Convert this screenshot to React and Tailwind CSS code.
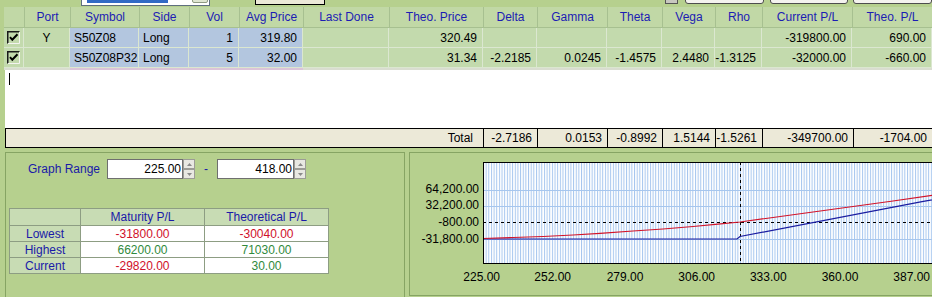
import React from 'react';

// column layout of the position grid
const COLS = [
  { title: '', align: 'center' },
  { title: 'Port', align: 'center' },
  { title: 'Symbol', align: 'left', blue: true },
  { title: 'Side', align: 'left', blue: true },
  { title: 'Vol', align: 'right', blue: true },
  { title: 'Avg Price', align: 'right', blue: true },
  { title: 'Last Done', align: 'right' },
  { title: 'Theo. Price', align: 'right' },
  { title: 'Delta', align: 'right' },
  { title: 'Gamma', align: 'right' },
  { title: 'Theta', align: 'right' },
  { title: 'Vega', align: 'right' },
  { title: 'Rho', align: 'right' },
  { title: 'Current P/L', align: 'right' },
  { title: 'Theo. P/L', align: 'right' },
];

const ROWS = [
  ['check', 'Y', 'S50Z08', 'Long', '1', '319.80', '', '320.49', '', '', '', '', '', '-319800.00', '690.00'],
  ['check', '', 'S50Z08P32', 'Long', '5', '32.00', '', '31.34', '-2.2185', '0.0245', '-1.4575', '2.4480', '-1.3125', '-32000.00', '-660.00'],
];

const TOTALS = ['-2.7186', '0.0153', '-0.8992', '1.5144', '-1.5261', '-349700.00', '-1704.00'];

const alignCls = {
  center: 'justify-center',
  left: 'justify-start pl-[4px]',
  right: 'justify-end pr-[5px]',
};

const gridCols =
  'grid grid-cols-[20px_46px_69px_50px_50px_64px_86px_94px_54px_70px_55px_53px_47px_90px_80px]';

function Check() {
  return (
    <svg width="13" height="13" viewBox="0 0 13 13">
      <path d="M0.5 12.5V0.5H12.5" fill="none" stroke="#1a1a1a" strokeWidth="2" />
      <path d="M12.5 1V12.5H1" fill="none" stroke="#f4f4f0" strokeWidth="1" />
      <path d="M3 6.2L5.3 8.8L10.5 3.2" fill="none" stroke="#000" strokeWidth="2" />
    </svg>
  );
}

function Spinner() {
  return (
    <div className="flex h-[20px] w-[12px] flex-col">
      <div className="flex h-[10px] items-center justify-center border border-[#9c9c96] bg-[#e8e8e2]">
        <svg width="5" height="3" viewBox="0 0 5 3">
          <path d="M0 3L2.5 0L5 3Z" fill="#8a8a8a" />
        </svg>
      </div>
      <div className="flex h-[10px] items-center justify-center border border-[#9c9c96] bg-[#e8e8e2]">
        <svg width="5" height="3" viewBox="0 0 5 3">
          <path d="M0 0L2.5 3L5 0Z" fill="#8a8a8a" />
        </svg>
      </div>
    </div>
  );
}

function PayoffChart() {
  // plot frame starts at x=73, y=9 inside the panel
  const red = '73,85.5 103,84.5 133,83.5 163,82 190,80.3 223,78 253,76 283,73.5 308,71.2 330,69 363,64.5 403,59 443,53.5 483,48 522,42.3 593,32.5';
  const blue = '73,86 327,86 330,83.5 512,48.7 593,33.2';
  const yLabels = [
    ['64,200.00', 40],
    ['32,200.00', 56],
    ['-800.00', 72.5],
    ['-31,800.00', 90],
  ];
  const xLabels = [
    ['225.00', 71.7],
    ['252.00', 142.7],
    ['279.00', 215],
    ['306.00', 286.7],
    ['333.00', 358.3],
    ['360.00', 430],
    ['387.00', 501.7],
  ];
  return (
    <svg width="598" height="142" className="block" fontFamily="Liberation Sans, Arial, sans-serif" fontSize="12">
      <defs>
        <pattern id="vgrid" x="73" y="0" width="2.65" height="10" patternUnits="userSpaceOnUse">
          <rect width="1" height="10" fill="#a6c6ee" />
        </pattern>
      </defs>
      <rect x="73" y="9" width="530" height="102" fill="#ffffff" />
      <rect x="73" y="9" width="530" height="102" fill="url(#vgrid)" />
      {[37, 53, 86].map((y) => (
        <line key={y} x1="73" x2="603" y1={y + 0.5} y2={y + 0.5} stroke="#a6c6ee" />
      ))}
      <line x1="73" x2="603" y1="69.5" y2="69.5" stroke="#000" strokeDasharray="3 3" />
      <line x1="330.5" x2="330.5" y1="9" y2="111" stroke="#000" strokeDasharray="3 3" />
      <polyline points={blue} fill="none" stroke="#1a1ca0" strokeWidth="1.2" />
      <polyline points={red} fill="none" stroke="#d2142a" strokeWidth="1.2" />
      <rect x="73.5" y="9.5" width="540" height="101" fill="none" stroke="#000" />
      {yLabels.map(([t, y]) => (
        <text key={t} x="69" y={y} textAnchor="end" fill="#000">
          {t}
        </text>
      ))}
      {xLabels.map(([t, x]) => (
        <text key={t} x={x} y="127.5" textAnchor="middle" fill="#000">
          {t}
        </text>
      ))}
    </svg>
  );
}

export default function App() {
  return (
    <div className="h-[297px] w-[932px] overflow-hidden bg-[#b6d08e] font-['Liberation_Sans',Arial,sans-serif] text-[12px] leading-none text-black">
      {/* toolbar, mostly scrolled off the top */}
      <div className="flex h-[7px] items-end">
        <div className="mb-[1px] ml-[81px] flex h-[22px] w-[129px] shrink-0 items-end border border-[#5f6f7f] bg-white pb-[2px] pl-[5px] pr-[1px]">
          <div className="h-[16px] w-[81px] bg-[#316ac5]" />
          <div className="ml-auto h-[19px] w-[16px] rounded-[2px] border border-[#8e9a82] bg-[#dfe6d2]" />
        </div>
        <div className="mb-[2px] ml-[45px] h-[20px] w-[70px] shrink-0 border border-black bg-[#ece9d8]" />
        <div className="mb-[3px] ml-[340px] h-[14px] w-[13px] shrink-0 border border-[#555] bg-[#c8c8c0]" />
        <div className="mb-[3px] ml-[7px] h-[20px] w-[79px] shrink-0 rounded-b-[3px] border border-[#4d4d4d] bg-[#f4f3ee]" />
        <div className="mb-[3px] ml-[6px] h-[20px] w-[78px] shrink-0 rounded-b-[3px] border border-[#4d4d4d] bg-[#f4f3ee]" />
        <div className="mb-[3px] ml-[5px] h-[20px] w-[79px] shrink-0 rounded-b-[3px] border border-[#4d4d4d] bg-[#f4f3ee]" />
      </div>

      {/* positions grid */}
      <div className={`ml-[4px] w-[928px] ${gridCols}`}>
        {COLS.map((c, i) => (
          <div
            key={i}
            className={`flex h-[21px] items-center justify-center border-b border-[#a7c090] bg-[#c1d8a6] text-[#1c1cb4] ${
              i > 0 ? 'border-l' : ''
            }`}
          >
            {c.title}
          </div>
        ))}
        {ROWS.map((row, r) =>
          row.map((v, i) => (
            <div
              key={`${r}-${i}`}
              className={`flex h-[20px] items-center whitespace-nowrap border-b border-r border-[#dbe7d0] ${
                alignCls[COLS[i].align]
              } ${COLS[i].blue ? 'bg-[#b3c6df]' : 'bg-[#c3daad]'}`}
            >
              {v === 'check' ? <Check /> : v}
            </div>
          ))
        )}
        {COLS.map((c, i) => (
          <div key={`s${i}`} className={`h-[2px] ${c.blue ? 'bg-[#dcc4d8]' : 'bg-[#d9ddd0]'}`} />
        ))}
      </div>

      {/* empty new-row area with caret */}
      <div className="ml-[5px] h-[58px] bg-white pl-[4px] pt-[3px]">
        <div className="h-[12px] w-[1px] bg-black" />
      </div>

      {/* totals */}
      <div className="ml-[5px] grid h-[20px] grid-cols-[477px_54px_70px_55px_53px_47px_91px_79px] border-y border-l border-black bg-[#ece9d8]">
        <div className="flex items-center justify-end pr-[10px]">Total</div>
        {TOTALS.map((t) => (
          <div key={t} className="flex items-center justify-end whitespace-nowrap border-l border-black pr-[5px]">
            {t}
          </div>
        ))}
      </div>

      {/* lower panels */}
      <div className="mt-[4px] flex">
        <div className="ml-[5px] h-[150px] w-[400px] shrink-0 border border-[#86a463]">
          <div className="mt-[6px] flex h-[20px] items-center">
            <div className="ml-[22px] w-[79px] text-[#1a1aa8]">Graph Range</div>
            <div className="flex h-[20px] w-[76px] items-center justify-end border border-[#6f6f6f] bg-white pr-[1px]">
              225.00
            </div>
            <Spinner />
            <div className="w-[22px] text-center text-[#1a1aa8]">-</div>
            <div className="flex h-[20px] w-[77px] items-center justify-end border border-[#6f6f6f] bg-white pr-[1px]">
              418.00
            </div>
            <Spinner />
          </div>

          <div className="ml-[3px] mt-[29px] grid w-fit grid-cols-[71px_124px_124px] border-l border-t border-[#8d9d83]">
            <div className="h-[17px] border-b border-r border-[#8d9d83] bg-[#c8dcb4]" />
            <div className="flex h-[17px] items-center justify-center border-b border-r border-[#8d9d83] bg-[#c8dcb4] text-[#1a1aa8]">
              Maturity P/L
            </div>
            <div className="flex h-[17px] items-center justify-center border-b border-r border-[#8d9d83] bg-[#c8dcb4] text-[#1a1aa8]">
              Theoretical P/L
            </div>

            <div className="flex h-[16px] items-center justify-center border-b border-r border-[#8d9d83] bg-[#c8dcb4] text-[#1a1aa8]">Lowest</div>
            <div className="flex h-[16px] items-center justify-center border-b border-r border-[#8d9d83] bg-white text-[#d0102a]">-31800.00</div>
            <div className="flex h-[16px] items-center justify-center border-b border-r border-[#8d9d83] bg-white text-[#d0102a]">-30040.00</div>

            <div className="flex h-[16px] items-center justify-center border-b border-r border-[#8d9d83] bg-[#c8dcb4] text-[#1a1aa8]">Highest</div>
            <div className="flex h-[16px] items-center justify-center border-b border-r border-[#8d9d83] bg-white text-[#2f8a3c]">66200.00</div>
            <div className="flex h-[16px] items-center justify-center border-b border-r border-[#8d9d83] bg-white text-[#2f8a3c]">71030.00</div>

            <div className="flex h-[16px] items-center justify-center border-b border-r border-[#8d9d83] bg-[#c8dcb4] text-[#1a1aa8]">Current</div>
            <div className="flex h-[16px] items-center justify-center border-b border-r border-[#8d9d83] bg-white text-[#d0102a]">-29820.00</div>
            <div className="flex h-[16px] items-center justify-center border-b border-r border-[#8d9d83] bg-white text-[#2f8a3c]">30.00</div>
          </div>
        </div>

        <div className="ml-[4px] h-[144px] w-[600px] shrink-0 border border-[#86a463]">
          <PayoffChart />
        </div>
      </div>
    </div>
  );
}
